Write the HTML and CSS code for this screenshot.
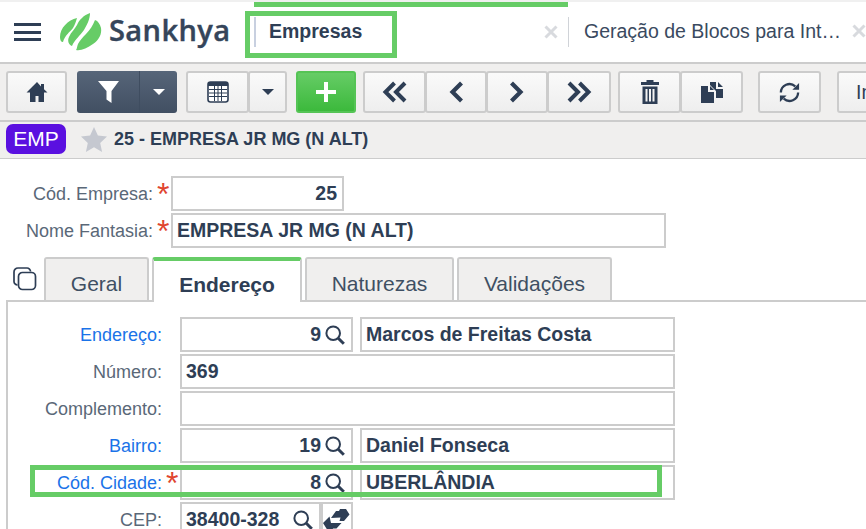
FILE: index.html
```html
<!DOCTYPE html>
<html lang="pt-BR">
<head>
<meta charset="utf-8">
<title>Empresas</title>
<link rel="stylesheet" href="styles.css">
</head>
<body>
<svg class="defs" width="0" height="0" aria-hidden="true">
  <symbol id="mag" viewBox="0 0 20 20"><circle cx="8.2" cy="8.200" r="6.800" fill="none" stroke="#2e3e55" stroke-width="2"/><path d="M13 13l5.800 5.800" stroke="#2e3e55" stroke-width="3" fill="none"/></symbol>
  <symbol id="close" viewBox="0 0 14 14"><path d="M1.500 1.500l11 11M12.500 1.500l-11 11" stroke="#d8dade" stroke-width="3" fill="none"/></symbol>
</svg>
<div class="app">
  <header class="topbar">
    <button class="burger" aria-label="Menu"><span></span><span></span><span></span></button>
    <div class="logo">
      <svg class="logo-mark" width="42" height="38" viewBox="0 0 42 38">
        <path fill="#66cc66" d="M17 5C8 7 0 15 0 24c0 3 1 5 3 5 2-7 7-10 10-14 2-3 3-7 4-10z"/>
        <path fill="#66cc66" d="M30 0c-6 2-11 7-13 12-2 4-6 7-8 12-2 4 0 8 3 9 3-7 8-10 12-16 3-5 6-11 6-17z"/>
        <path fill="#66cc66" d="M35 7c-2 5-5 10-9 14-3 3-6 6-8 10-1 2-1 5-2 6 5 1 11-2 17-6 6-4 9-10 8-16-1-4-3-7-6-8z"/>
      </svg>
      <span class="logo-text">Sankhya</span>
    </div>
    <div class="doc-tab doc-tab-active">
      <span class="doc-tab-label">Empresas</span>
      <svg class="doc-close"><use href="#close"/></svg>
    </div>
    <div class="doc-tab doc-tab-second">
      <span class="doc-tab-label">Geração de Blocos para Int…</span>
      <svg class="doc-close"><use href="#close"/></svg>
    </div>
  </header>

  <nav class="toolbar">
    <div class="group">
      <button class="tbtn w61"><svg width="22" height="22" viewBox="0 0 22 22"><path fill="#2e3e55" d="M11 1L.5 11.500H4V21h5.500v-6h3v6H18v-9.500h3.500L18 8.200V3h-3v2.400z"/></svg></button>
    </div>
    <div class="group group-dark ml10">
      <button class="tbtn w62"><svg width="21" height="22" viewBox="0 0 21 22"><path fill="#fff" d="M0 0h21l-7.500 10v12l-5-3.500V10z"/></svg></button>
      <button class="tbtn w38"><span class="caret caret-white"></span></button>
    </div>
    <div class="group ml9">
      <button class="tbtn w63"><svg width="22" height="22" viewBox="0 0 22 22"><rect x="1" y="1" width="20" height="20" rx="2.500" fill="#fff" stroke="#2e3e55" stroke-width="1.600"/><path fill="#2e3e55" d="M1 3.500a2.500 2.500 0 0 1 2.500-2.500h15a2.500 2.500 0 0 1 2.500 2.500V5H1z"/><path stroke="#2e3e55" stroke-width="1" d="M2 8.500h18M2 12h18M2 15.500h18M7.500 5v15M11 5v15M14.500 5v15"/></svg></button>
      <button class="tbtn w39"><span class="caret"></span></button>
    </div>
    <div class="group ml9">
      <button class="tbtn tbtn-green w60"><svg width="22" height="22" viewBox="0 0 22 22"><path fill="#fff" d="M9 1h4v8h8v4h-8v8H9v-8H1V9h8z"/></svg></button>
    </div>
    <div class="group ml7">
      <button class="tbtn w63"><svg width="25" height="24" viewBox="0 0 25 24"><path fill="none" stroke="#2e3e55" stroke-width="4" d="M12.500 3l-9 9 9 9M23 3l-9 9 9 9"/></svg></button>
      <button class="tbtn w62"><svg width="16" height="24" viewBox="0 0 16 24"><path fill="none" stroke="#2e3e55" stroke-width="4.200" d="M13.500 3l-9 9 9 9"/></svg></button>
      <button class="tbtn w62"><svg width="16" height="24" viewBox="0 0 16 24"><path fill="none" stroke="#2e3e55" stroke-width="4.200" d="M2.500 3l9 9-9 9"/></svg></button>
      <button class="tbtn w64"><svg width="25" height="24" viewBox="0 0 25 24"><path fill="none" stroke="#2e3e55" stroke-width="4" d="M2 3l9 9-9 9M12.500 3l9 9-9 9"/></svg></button>
    </div>
    <div class="group ml7">
      <button class="tbtn w63"><svg width="18" height="24" viewBox="0 0 18 24"><path fill="#2e3e55" fill-rule="evenodd" d="M5.500 0h7v2H18v3H0V2h5.500zM1.500 6.500h15V24h-15zM4.500 9v12.500h2V9zM8 9v12.500h2V9zM11.500 9v12.500h2V9z"/></svg></button>
      <button class="tbtn w63"><svg width="22" height="21" viewBox="0 0 22 21"><path fill="#2e3e55" d="M0 4h7v6h6v11H0zM9 4l4 4H9zM9 0h6v7h7v9h-7V9L9 3zM17 0l5 5h-5z"/></svg></button>
    </div>
    <div class="group ml15">
      <button class="tbtn w63"><svg width="23" height="23" viewBox="0 0 24 24"><path fill="none" stroke="#2e3e55" stroke-width="2.400" d="M3 12a9 9 0 0 1 15-6.500M21 12a9 9 0 0 1-15 6.500"/><path fill="#2e3e55" d="M22 2v7h-7zM2 22v-7h7z"/></svg></button>
    </div>
    <div class="group ml16">
      <button class="tbtn tbtn-text w63">In</button>
    </div>
  </nav>

  <div class="titlebar">
    <span class="badge">EMP</span>
    <svg class="star" width="26" height="25" viewBox="0 0 26 25"><path fill="#c5c8d0" d="M13 0l3.900 8.600 9.100 1-6.800 6.300 1.900 9.100-8.100-4.700L4.900 25l1.900-9.100L0 9.600l9.100-1z"/></svg>
    <span class="title">25 - EMPRESA JR MG (N ALT)</span>
  </div>

  <main class="form">
    <div class="head-rows">
      <div class="row">
        <label class="lbl">Cód. Empresa:</label><span class="req">*</span>
        <div class="field num w173">25</div>
      </div>
      <div class="row">
        <label class="lbl">Nome Fantasia:</label><span class="req">*</span>
        <div class="field w495">EMPRESA JR MG (N ALT)</div>
      </div>
    </div>

    <div class="tabs">
      <svg class="copy" width="24" height="24" viewBox="0 0 24 24"><rect x="5.500" y="5.500" width="17" height="17" rx="4" fill="none" stroke="#2e3e55" stroke-width="1.700"/><path fill="none" stroke="#2e3e55" stroke-width="1.700" d="M4.500 18A3.500 3.500 0 0 1 1 14.500V5a4 4 0 0 1 4-4h9a3.500 3.500 0 0 1 3.500 3.500"/></svg>
      <div class="tab w105">Geral</div>
      <div class="tab tab-active w150">Endereço</div>
      <div class="tab w149">Naturezas</div>
      <div class="tab w155">Validações</div>
    </div>

    <section class="panel">
      <div class="row">
        <label class="lbl lbl-link">Endereço:</label><span class="req"></span>
        <div class="field num w173">9<svg class="mag"><use href="#mag"/></svg></div>
        <div class="field desc w315">Marcos de Freitas Costa</div>
      </div>
      <div class="row">
        <label class="lbl">Número:</label><span class="req"></span>
        <div class="field w495">369</div>
      </div>
      <div class="row">
        <label class="lbl">Complemento:</label><span class="req"></span>
        <div class="field w495"></div>
      </div>
      <div class="row">
        <label class="lbl lbl-link">Bairro:</label><span class="req"></span>
        <div class="field num w173">19<svg class="mag"><use href="#mag"/></svg></div>
        <div class="field desc w315">Daniel Fonseca</div>
      </div>
      <div class="row">
        <label class="lbl lbl-link">Cód. Cidade:</label><span class="req">*</span>
        <div class="field num w173">8<svg class="mag"><use href="#mag"/></svg></div>
        <div class="field desc w315">UBERLÂNDIA</div>
      </div>
      <div class="row">
        <label class="lbl">CEP:</label><span class="req"></span>
        <div class="field cep">38400-328<svg class="mag mag-cep"><use href="#mag"/></svg></div>
        <div class="field cep-btn"><svg width="28" height="24" viewBox="0 0 28 24"><path fill="#2e3e55" d="M8 10l5-7h3l1-2h6l3.500 5.500L21 13h-4.500l1-3.500zM0 15l6.500-6.500L8 15h10.500l-5 5.500H10L9 23H5z"/></svg></div>
      </div>
    </section>
  </main>

  <div class="mark mark-tab"></div>
  <div class="mark mark-city"></div>
</div>
</body>
</html>
```
FILE: styles.css
```css
* { box-sizing: border-box; }
html, body { margin: 0; padding: 0; background: #fff; }
body { font-family: "Liberation Sans", Arial, sans-serif; color: #2e3e55; }
.defs { position: absolute; }
.app { position: relative; width: 866px; height: 529px; overflow: hidden; }

/* top bar */
.topbar {
  display: flex; height: 64px; padding-top: 2px;
  background: #fff; border-top: 2px solid #f0f0f0; border-bottom: 2px solid #ccc;
  white-space: nowrap;
}
.burger {
  width: 27px; height: 18px; margin: 19px 0 0 14px; padding: 0; border: 0; background: none;
  display: flex; flex-direction: column; justify-content: space-between; flex: none;
}
.burger span { display: block; height: 3px; background: #2e3e55; }
.logo { display: flex; align-items: flex-start; width: 213px; flex: none; padding: 9px 0 0 19px; }
.logo-mark { flex: none; }
.logo-text {
  font-family: "Open Sans", sans-serif; font-weight: 600; font-size: 29px; line-height: 34px;
  margin-left: 7px; color: #35455a; letter-spacing: .4px; -webkit-text-stroke: .4px #35455a;
}
.doc-tab { display: flex; align-items: flex-start; flex: none; font-size: 19.500px; height: 60px; }
.doc-tab-active {
  width: 314px; margin-top: -2px; border-top: 5px solid #66cc66; padding: 11px 0 0 15px; font-weight: 700;
  position: relative;
}
.doc-tab-active::before {
  content: ""; position: absolute; left: 0; top: 10px; width: 2px; height: 30px; background: #c8d0e0;
}
.doc-tab-active .doc-tab-label { width: 275px; line-height: 26px; }
.doc-tab-second {
  width: 298px; margin-top: 13px; height: 30px; border-left: 1px solid #d0d3d8; padding-left: 15px; color: #3a4a60;
}
.doc-tab-second .doc-tab-label { width: 276px; line-height: 28px; }
.doc-close { width: 14px; height: 14px; margin-top: 7px; flex: none; }

/* toolbar */
.toolbar {
  display: flex; height: 58px; padding: 7px 0 0 6px; background: #f0efee;
  border-bottom: 2px solid #ccc;
}
.group { display: flex; flex: none; height: 42px; }
.tbtn {
  display: flex; align-items: center; justify-content: center; flex: none; height: 42px; padding: 0;
  border: 2px solid #ccc; border-radius: 3px; background: linear-gradient(#fafafa, #eeeeee);
  font-family: inherit; color: #2e3e55;
}
.group .tbtn + .tbtn { margin-left: -1px; }
.group-dark .tbtn { border: 0; border-radius: 3px 0 0 3px; background: linear-gradient(#566579, #414f62); }
.group-dark .tbtn + .tbtn { margin-left: 0; border-left: 1px solid #3f4d60; border-radius: 0 3px 3px 0; }
.tbtn-green { border-color: #55c455; background: linear-gradient(#66cc66, #3cb93c); }
.tbtn-text { justify-content: flex-start; padding-left: 17px; font-size: 19.500px; }
.caret { width: 0; height: 0; border: 6px solid transparent; border-top: 6px solid #2e3e55; border-bottom: 0; }
.caret-white { border-top-color: #fff; }
.w38 { width: 38px; } .w39 { width: 39px; } .w60 { width: 60px; } .w61 { width: 61px; }
.w62 { width: 62px; } .w63 { width: 63px; } .w64 { width: 64px; }
.ml7 { margin-left: 7px; } .ml9 { margin-left: 9px; } .ml10 { margin-left: 10px; }
.ml15 { margin-left: 15px; } .ml16 { margin-left: 16px; }

/* title bar */
.titlebar {
  display: flex; align-items: center; height: 37px; padding: 0 0 2px 6px;
  background: #f0efee; border-bottom: 1px solid #ccc;
}
.badge {
  width: 60px; height: 30px; border-radius: 7px; background: #5a10e0; color: #fff;
  font-size: 21px; line-height: 30px; text-align: center;
}
.star { margin-left: 15px; }
.title { margin-left: 7px; font-size: 18px; font-weight: 700; }

/* form */
.form { padding-top: 17px; }
.head-rows { display: flex; flex-direction: column; gap: 2px; }
.row { display: flex; height: 35px; }
.lbl { width: 153px; flex: none; text-align: right; font-size: 18px; line-height: 37px; color: #5a6878; white-space: nowrap; }
.lbl-link { color: #1a73e8; }
.req { width: 18px; flex: none; color: #e0452f; font-size: 32px; line-height: 37px; padding-left: 4px; font-weight: 400; overflow: hidden; }
.field {
  flex: none; height: 35px; border: 2px solid #ccc; background: #fff; padding: 0 4px 2px;
  font-size: 19.500px; font-weight: 700; line-height: 30px; color: #2e3e55; white-space: nowrap;
  display: flex; align-items: center;
}
.num { justify-content: flex-end; }
.w173 { width: 173px; padding-right: 5px; }
.w315 { width: 315px; }
.w495 { width: 495px; }
.desc { margin-left: 7px; }
.mag { width: 20px; height: 20px; margin: 2px 1px 0 4px; flex: none; }
.cep { width: 141px; }
.mag-cep { margin: 2px 0 0 14px; }
.cep-btn { width: 32px; padding: 0; justify-content: center; }

/* tabs */
.tabs { display: flex; align-items: flex-end; height: 45px; margin-top: 7px; padding-left: 13px; }
.copy { flex: none; margin: 0 7px 9px 0; }
.tab {
  flex: none; height: 43px; margin-right: 3px; border: 2px solid #ccc; border-bottom: 0;
  border-radius: 3px 3px 0 0; background: #f0efee;
  font-size: 21px; line-height: 50px; text-align: center; color: #3f4f63;
}
.tab-active {
  position: relative; top: 2px; height: 45px; background: #fff; border-top: 4px solid #66cc66;
  font-weight: 700; color: #2e3e55; line-height: 48px;
}
.w105 { width: 105px; } .w150 { width: 150px; } .w149 { width: 149px; } .w155 { width: 155px; }

.panel {
  display: flex; flex-direction: column; gap: 2px; margin-left: 6px; padding: 15px 0 0 1px;
  border-top: 2px solid #ccc; border-left: 2px solid #ccc; height: 240px;
}

/* annotation rectangles drawn over the screenshot */
.mark { position: absolute; border: 5px solid #66cc66; pointer-events: none; }
.mark-tab { left: 245px; top: 11px; width: 152px; height: 47px; }
.mark-city { left: 30px; top: 465px; width: 632px; height: 32px; }
```
